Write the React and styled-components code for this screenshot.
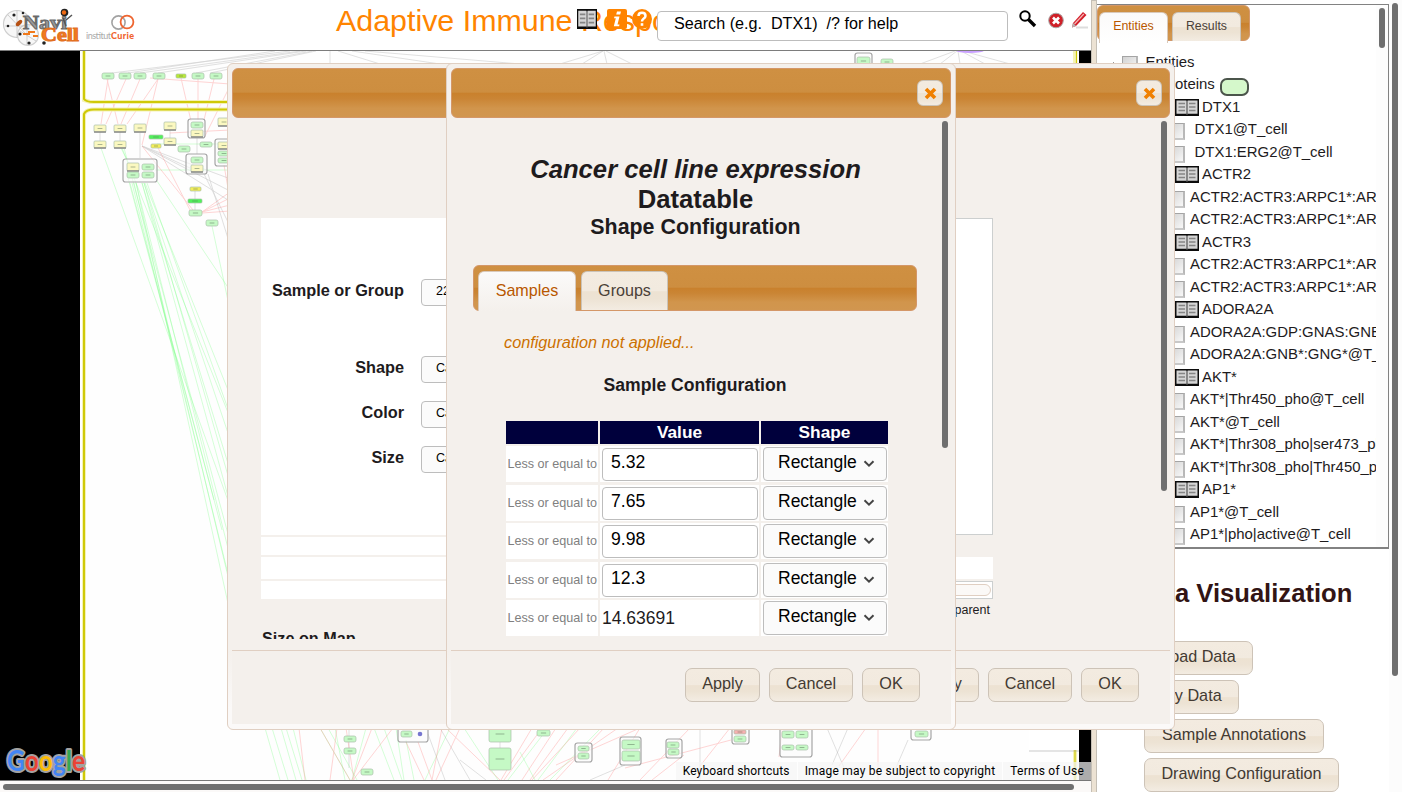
import React from "react";
import styled, { createGlobalStyle, css } from "styled-components";

const Global = createGlobalStyle`
  * { box-sizing: border-box; }
  html, body { margin: 0; padding: 0; overflow: hidden; }
  body { font-family: "Liberation Sans", Arial, Helvetica, sans-serif; color: #1e1b1d; background: #fff; }
`;

const bronze = css`
  background: linear-gradient(#cf9042 0%, #cd8e40 48%, #c9812d 51%, #ca8535 62%, #d1954c 82%, #d1964f 100%);
  border: 1px solid #d49768;
`;
const cream = css`
  background: linear-gradient(#f3ebe0 0%, #f2eadf 49%, #ede2d2 52%, #ede3d4 70%, #f3ece2 100%);
  border: 1px solid #cbc3b8;
`;

const Page = styled.div`
  position: relative;
  display: flex;
  width: 1402px;
  height: 792px;
  overflow: hidden;
  background: #fff;
`;
const MapPane = styled.div`
  width: 1091px;
  display: flex;
  flex-direction: column;
`;
const Splitter = styled.div`
  width: 6px;
  background: #ece2d3;
  border: 1px solid #c5bfb5;
  border-bottom: 0;
`;
const Header = styled.header`
  height: 51px;
  flex: none;
  display: flex;
  align-items: flex-start;
  border-bottom: 1px solid #7c7c7c;
`;
const Logos = styled.div`
  width: 336px;
  height: 50px;
`;
const Title = styled.h1`
  width: 241px;
  margin: 2px 0 0;
  font-size: 30.4px;
  line-height: 37px;
  font-weight: 400;
  white-space: nowrap;
  color: #ff8400;
`;
const Tools = styled.div`
  z-index: 1;
  display: flex;
  align-items: flex-start;
  padding-top: 9px;
  svg { display: block; }
`;
const ToolSlot = styled.div`
  margin-left: ${(p) => p.$gap || 0}px;
`;
const SearchBox = styled.div`
  width: 351px;
  height: 30px;
  margin: 2px 0 0 5px;
  padding: 0 16px;
  border: 1px solid #bdbdbd;
  border-radius: 4px;
  background: #fff;
  color: #000;
  font-size: 16.15px;
  line-height: 23px;
  white-space: pre;
`;
const MapView = styled.div`
  position: relative;
  flex: 1;
  background: #000;
  border-bottom: 1px solid #777;
  overflow: hidden;
`;
const MapDrawing = styled.svg`
  display: block;
`;
const MapCredits = styled.div`
  position: absolute;
  right: 0;
  bottom: 0;
  display: flex;
  gap: 1px;
`;
const Credit = styled.span`
  height: 18px;
  padding: 0 7px;
  font: 12px/18px Roboto, sans-serif;
  letter-spacing: ${(p) => p.$track || 0}px;
  color: #000;
  white-space: nowrap;
  background: rgba(245, 245, 245, 0.7);
`;
const HScroll = styled.div`
  height: 11px;
  flex: none;
  padding: 3px 0 0 3px;
  background: #fbf9f8;
`;
const HThumb = styled.div`
  width: 1071px;
  height: 6px;
  border-radius: 3px;
  background: #6f6f6f;
`;

const SidePane = styled.aside`
  width: 305px;
  display: flex;
`;
const SideMain = styled.div`
  width: 292px;
  padding-top: 4px;
`;
const SideScroll = styled.div`
  flex: 1;
  padding: 3px 0 0 3px;
  background: #fcfcfc;
`;
const Thumb = styled.div`
  width: 6px;
  height: ${(p) => p.$h}px;
  border-radius: 3px;
  background: #6f6f6f;
`;
const TreePanel = styled.div`
  display: flex;
  height: 545px;
  border: 1px solid #828282;
  border-left: 0;
  border-bottom-width: 2px;
`;
const TreeBody = styled.div`
  width: 279px;
  overflow: hidden;
`;
const TreeScroll = styled.div`
  flex: 1;
  padding: 3px 0 0 3px;
  background: #fdfdfd;
`;
const TabBar = styled.div`
  ${bronze}
  display: flex;
  align-items: flex-start;
  gap: ${(p) => (p.$small ? 4 : 5)}px;
  width: ${(p) => p.$w};
  height: ${(p) => (p.$small ? 36 : 46)}px;
  padding: ${(p) => (p.$small ? "6px 0 0 1px" : "5px 0 0 4px")};
  border-radius: 6px;
`;
const Tab = styled.div`
  ${cream}
  width: ${(p) => p.$w}px;
  height: ${(p) => p.$h}px;
  border-bottom: 0;
  border-radius: 6px 6px 0 0;
  text-align: center;
  font-size: ${(p) => p.$size}px;
  line-height: ${(p) => p.$lh}px;
  color: #4a4037;
  ${(p) => p.$active && css`
    background: linear-gradient(#fbfaf9, ${p.$end});
    border-color: #d9c9ba;
    color: #b85700;
  `}
`;
const Tree = styled.div`
  padding-top: 9.5px;
  width: 400px;
`;
const TreeRow = styled.div`
  display: flex;
  height: 22.5px;
  padding-left: ${(p) => p.$indent}px;
  gap: ${(p) => p.$gap}px;
  font-size: 14.94px;
  line-height: 22px;
  white-space: nowrap;
  svg { flex: none; margin-top: 3px; }
`;
const CheckBox = styled.span`
  flex: none;
  width: 16px;
  height: 17px;
  margin-top: ${(p) => p.$top}px;
  border: 1px solid #9c9c9c;
  border-width: 1px 2px 2px 1px;
  border-color: #a4a4a4 #b8b8b8 #c8c8c8 #a4a4a4;
  background: linear-gradient(135deg, #d2d2d2, #f8f8f8);
`;
const Twisty = styled.span`
  width: 0;
  height: 0;
  margin: 11px 8px 0 0;
  border-left: 4px solid transparent;
  border-bottom: 4px solid #333;
`;
const ProteinSwatch = styled.span`
  width: 29px;
  height: 18px;
  margin-top: 5px;
  border: 2px solid #4b554b;
  border-radius: 7px;
  background: #d5f8cb;
`;
const SideTitle = styled.h2`
  margin: 28px 0 32px;
  font-size: 25.6px;
  line-height: 32px;
  text-align: center;
  color: #321414;
  white-space: nowrap;
`;
const SideButtons = styled.div`
  display: flex;
  flex-direction: column;
  align-items: flex-start;
  gap: 5px;
  padding-left: 47px;
`;
const Button = styled.div`
  ${cream}
  width: ${(p) => p.$w}px;
  height: 34px;
  flex: none;
  border-radius: 7px;
  border-color: #cdc3b7;
  text-align: center;
  font-size: 16.2px;
  line-height: 29px;
  color: #433a32;
`;

const Dialog = styled.section`
  position: absolute;
  left: ${(p) => p.$x}px;
  top: 63px;
  width: ${(p) => p.$w}px;
  height: 667px;
  display: flex;
  flex-direction: column;
  padding: 4px 4px 5px 4px;
  border: 1px solid #e0cfc2;
  border-radius: 6px;
  background: linear-gradient(#f4f0ec 0%, #f4f0ec 88%, #fbf9f8 97%);
`;
const DialogTitle = styled.div`
  ${bronze}
  height: 50px;
  flex: none;
  display: flex;
  justify-content: flex-end;
  border-radius: 6px;
  padding: 11px 7px 0 0;
`;
const CloseButton = styled.div`
  ${cream}
  width: 26px;
  height: 26px;
  display: grid;
  place-items: center;
  border-radius: 6px;
`;
const DialogBody = styled.div`
  flex: 1;
  display: flex;
  min-height: 0;
  background: #f4f0ec;
`;
const DialogContent = styled.div`
  flex: 1;
  height: 521px;
  overflow: hidden;
`;
const DialogScroll = styled.div`
  width: 9px;
  padding-top: 3px;
`;
const DialogFoot = styled.div`
  height: 74px;
  flex: none;
  display: flex;
  justify-content: flex-end;
  gap: 9px;
  padding: 17px 31px 0 0;
  border-top: 1px solid #e0cfc2;
  background: #f4f0ec;
`;

const Options = styled.div`
  display: flex;
  margin: 100px 0 0 29px;
  width: 732px;
`;
const OptionColumn = styled.div`
  width: 366px;
  display: flex;
  flex-direction: column;
`;
const OptionForm = styled.div`
  height: 317px;
  padding: 61px 0 0 10px;
  background: #fff;
`;
const OptionRow = styled.div`
  display: flex;
  height: 26px;
  margin-bottom: ${(p) => p.$gap}px;
`;
const OptionLabel = styled.label`
  width: 133px;
  text-align: right;
  font-size: 16.3px;
  font-weight: 700;
  line-height: 22px;
`;
const SmallSelect = styled.div`
  width: 180px;
  height: 27px;
  margin-left: 17px;
  padding-left: 14px;
  border: 1px solid #bdbdbd;
  border-radius: 4px;
  background: #fbfbfb;
  font-size: 12.5px;
  line-height: 23px;
  color: #000;
  white-space: nowrap;
`;
const Strip = styled.div`
  height: ${(p) => p.$h}px;
  margin-top: ${(p) => p.$mt}px;
  background: #fff;
`;
const PreviewBox = styled.div`
  height: 317px;
  border: 1px solid #cccfcf;
  background: #fff;
`;
const SliderBox = styled.div`
  height: 18px;
  margin-top: 2px;
  padding: 2px 1px;
  border: 1px solid #cccfcf;
  background: #fff;
`;
const SliderTrack = styled.div`
  height: 12px;
  border: 1px solid #e0cfc2;
  border-radius: 6px;
  background: #fbf9f7;
`;
const SliderCaption = styled.div`
  margin-top: 3px;
  padding-right: 3px;
  text-align: right;
  font-size: 12.5px;
  line-height: 16px;
  height: 16px;
`;
const SectionLabel = styled.div`
  margin: 10px 0 0 30px;
  font-size: 16.2px;
  font-weight: 700;
  line-height: 20px;
`;

const Heading = styled.div`
  padding: 36px 1px 0 0;
  width: 490px;
  text-align: center;
  font-weight: 700;
  font-size: 25.65px;
  line-height: 30px;
`;
const SubHeading = styled.div`
  font-size: 21.4px;
  line-height: 26px;
`;
const TabArea = styled.div`
  padding: 25px 0 0 22px;
`;
const Status = styled.p`
  margin: 21px 0 0 31px;
  font-size: 16.25px;
  line-height: 20px;
  font-style: italic;
  color: #cc7000;
`;
const TableTitle = styled.div`
  margin: 22px 0 0;
  width: 444px;
  text-align: center;
  font-size: 17.6px;
  font-weight: 700;
  line-height: 22px;
`;
const Grid = styled.div`
  display: grid;
  grid-template-columns: 92px 159px 127px;
  column-gap: 2px;
  row-gap: 2.5px;
  margin: 25px 0 0 33px;
`;
const HeadCell = styled.div`
  height: 22.6px;
  background: #00003c;
  color: #fff;
  text-align: center;
  font-size: 17.3px;
  font-weight: 700;
  line-height: 23px;
`;
const Cell = styled.div`
  height: 36px;
  padding: 1px 2px;
  background: #fff;
`;
const HintCell = styled(Cell)`
  font-size: 12.6px;
  line-height: 35.5px;
  white-space: nowrap;
  color: #808080;
  padding-left: 1.5px;
`;
const ValueInput = styled.div`
  width: 156px;
  height: 33px;
  margin-top: 1px;
  padding-left: 8px;
  border: 1px solid #bdbdbd;
  border-radius: 4px;
  font-size: 17.6px;
  line-height: 26px;
  color: #000;
`;
const FixedValue = styled.div`
  font-size: 17.5px;
  line-height: 34px;
`;
const ShapeSelect = styled.div`
  width: 124px;
  height: 34px;
  display: flex;
  align-items: flex-start;
  padding: 0 11px 0 14px;
  justify-content: space-between;
  border: 1px solid #bdbdbd;
  border-radius: 4px;
  background: #fbfbfb;
  font-size: 17.5px;
  line-height: 28px;
  color: #000;
  svg { margin-top: 12px; }
`;

const Book = ({ w = 24, h = 17 }) => (
  <svg width={w} height={h} viewBox="0 0 24 17" preserveAspectRatio="none">
    <rect width="24" height="17" fill="#0c0c0c" />
    <path d="M1.5 1.5H11L12 2.2L13 1.5H22.5V14.8H1.5Z" fill="#d5d5d5" />
    <path d="M12 1.5V16" stroke="#555" strokeWidth="1.2" />
    <path d="M3.5 4.5H10M3.5 8H10M3.5 11.5H10M14 4.5H20.5M14 8H20.5M14 11.5H20.5" stroke="#858585" strokeWidth="1.5" />
  </svg>
);

const Cross = () => (
  <svg width="13" height="13" viewBox="0 0 13 13">
    <path d="M2 2L11 11M11 2L2 11" stroke="#f08000" strokeWidth="3.6" />
  </svg>
);

const Chevron = () => (
  <svg width="12" height="8" viewBox="0 0 12 8">
    <path d="M1.5 1.2L6 5.6L10.5 1.2" fill="none" stroke="#444" strokeWidth="2" />
  </svg>
);

const LogoArt = () => (
  <svg width="140" height="50" viewBox="0 0 140 50">
    <g fill="#f7f7f7" stroke="#cfcfcf" strokeWidth="1.2">
      <circle cx="17" cy="24" r="13.5" />
      <circle cx="28" cy="35" r="10.5" />
    </g>
    <g stroke="#bbb" strokeWidth=".7" fill="none">
      <path d="M8 15L25 33M17 11V38M5 26H30M20 31L36 41M27 26V45" />
    </g>
    <g fill="#222">
      <circle cx="14" cy="15" r="1.6" /><circle cx="23" cy="13" r="1.3" /><circle cx="8" cy="26" r="1.3" />
      <circle cx="20" cy="34" r="1.6" /><circle cx="29" cy="43" r="1.6" /><circle cx="44" cy="43" r="1.8" />
      <ellipse cx="19" cy="23" rx="4" ry="2" transform="rotate(-45 19 23)" fill="#b65013" />
    </g>
    <path d="M23 34H30M28 32H35M33 36H38" stroke="#f07a1c" strokeWidth="2" />
    <g fontFamily="Liberation Serif, serif" fontWeight="700">
      <text x="23" y="28.5" fontSize="18" fill="#9a9a9a" stroke="#6a6a6a" strokeWidth="1" textLength="44" lengthAdjust="spacingAndGlyphs">Navi</text>
      <text x="41" y="40.500" fontSize="19" fill="#f47a1f" stroke="#e2701f" strokeWidth="1" textLength="38" lengthAdjust="spacingAndGlyphs">Cell</text>
    </g>
    <path d="M63 18L66 26M66 20L72 15" stroke="#555" strokeWidth="1.5" />
    <circle cx="64.500" cy="12.500" r="3.800" fill="#222" />
    <circle cx="64" cy="12.500" r="2.200" fill="#ef6a13" />
    <circle cx="118.500" cy="22.500" r="6.600" fill="none" stroke="#a2a2a2" strokeWidth="1.600" />
    <circle cx="127" cy="22" r="6.400" fill="none" stroke="#ee6530" strokeWidth="1.800" />
    <g fontFamily="Lato, sans-serif" fontSize="9">
      <text x="86" y="38.500" fill="#aaa" textLength="25">institut</text>
      <text x="111" y="38.500" fill="#f0622d" fontWeight="900" textLength="23">Curie</text>
    </g>
  </svg>
);

/* [x, y, width, height, kind] */
const NODES = [
  [102, 73, 12, 6, "g"], [119, 73, 12, 6, "g"], [134, 73, 12, 6, "g"], [153, 73, 12, 6, "g"],
  [176, 74, 10, 4, "l"], [192, 73, 12, 6, "g"], [210, 73, 12, 6, "g"],
  [94, 125, 12, 7, "y"], [114, 125, 12, 7, "y"], [134, 124, 12, 8, "y"], [164, 122, 12, 8, "y"],
  [94, 141, 12, 7, "y"], [114, 141, 12, 7, "y"], [164, 138, 12, 7, "y"],
  [149, 135, 14, 4, "b"], [151, 144, 10, 4, "s"], [178, 146, 12, 6, "g"], [200, 142, 12, 5, "g"],
  [218, 118, 12, 8, "y"],
  [127, 163, 12, 8, "y"], [142, 164, 12, 6, "g"], [127, 172, 12, 6, "g"], [142, 172, 12, 6, "g"],
  [191, 122, 12, 6, "g"], [191, 130, 12, 7, "y"], [191, 157, 12, 6, "g"], [191, 165, 12, 7, "y"],
  [218, 142, 12, 7, "y"], [218, 151, 12, 5, "g"], [218, 158, 12, 5, "g"],
  [190, 187, 11, 4, "s"], [188, 199, 14, 4, "b"], [189, 210, 13, 6, "g"], [206, 220, 12, 6, "g"],
  [857, 57, 13, 8, "g"], [881, 59, 12, 6, "g"],
  [344, 736, 12, 6, "g"], [344, 748, 12, 6, "g"], [361, 769, 12, 6, "g"], [401, 731, 11, 6, "g"],
  [489, 726, 22, 16, "g"], [489, 748, 22, 22, "g"], [537, 730, 13, 6, "g"],
  [578, 746, 11, 5, "g"], [578, 753, 11, 6, "g"], [622, 740, 18, 9, "g"], [622, 751, 18, 10, "g"],
  [667, 742, 12, 6, "g"], [668, 749, 11, 6, "g"], [734, 730, 12, 4, "r"], [734, 736, 12, 6, "g"],
  [782, 731, 12, 7, "g"], [796, 731, 12, 7, "g"], [782, 745, 12, 5, "g"], [796, 745, 12, 5, "g"],
  [915, 731, 13, 6, "g"],
];
const FRAMES = [
  [123, 159, 34, 23], [188, 119, 17, 19], [186, 154, 21, 20], [215, 139, 20, 27],
  [855, 53, 17, 14], [398, 722, 30, 20], [575, 743, 17, 19], [620, 737, 21, 28],
  [666, 739, 16, 19], [732, 722, 17, 22], [780, 722, 32, 35], [911, 722, 20, 18],
];
const FILL = { g: "#c5f9c5", y: "#fbf8c0", l: "#b9e836", b: "#4ff259", s: "#f4ee58", r: "#f6b0b0" };

const GREEN = [
  "M101 148L235 520", "M121 148L127 160", "M157 181L231 292", "M212 226L230 310",
  "M144 183L235 500", "M142 183L230 470", "M122 148L235 430", "M124 148L235 560", "M136 183L236 640",
  "M134 183L236 610", "M132 183L232 590", "M145 183L232 400", "M147 183L232 420", "M144 183L232 445",
  "M130 183L222 530", "M128 178L214 500", "M142 183L240 540", "M136 183L236 580", "M157 144H228M155 170H228",
  "M265 728L280 780", "M272 728L288 780", "M281 728L296 780", "M286 728L302 780", "M293 728L306 780",
  "M320 728L350 780", "M328 728L357 780", "M335 728L345 780", "M366 728L352 780", "M374 728L394 780",
  "M384 728L402 780", "M396 728L404 780", "M406 740L414 780", "M450 728L425 780", "M464 728L498 780",
  "M520 752L535 780", "M548 728L508 780", "M577 728L538 780", "M601 728L550 780",
];
const RED = [
  "M108 79L101 124M107 79L118 124M126 79L106 124M140 79L121 124M158 79L127 124M158 79L142 145",
  "M181 78L191 121M198 79V120M214 79L204 120M230 86L204 138M150 78L230 84",
  "M142 146L193 210M157 146L190 210", "M202 212L230 192M202 212L230 198M202 212L230 205M202 213L230 211",
  "M170 133L230 130", "M224 165L230 200",
  "M299 728L305 780M320 728L350 780M337 728L330 780M346 728L354 780M393 728L353 780M372 728L352 780",
  "M406 742L424 780M418 742L432 780M442 728L432 780M460 728L436 780M448 730L500 780",
  "M532 728L501 780M542 728L504 780M556 728L522 780M568 728L530 780M580 728L532 780M604 728L556 780M618 728L543 780M640 728L608 780",
  "M625 768L731 740M684 755L652 780M690 728L640 780M730 728L700 766M782 730L779 757M878 728V780M866 728L839 766M556 765L640 728",
];
const GREY = [
  "M290 51L112 73M275 51L128 73M300 51L140 73M306 51L158 73M312 51L196 73M316 51L210 73M330 51L330 64M338 51L380 64M352 51L440 64M365 51L520 64",
  "M603 51L560 64M603 51L582 64M604 51L607 64M606 51L632 64", "M955 51L920 64M957 51L940 64M958 51L960 64M961 51L985 64M963 51L1010 64",
  "M142 146L228 178M142 146L228 190M142 146L228 200M142 146L190 168", "M140 133V158M100 132V141M120 132V141M195 191V210M170 130V138M197 138V154",
  "M208 174L230 245M204 174L228 222", "M349 730V768M500 742V748M428 734L445 780M460 760L486 780M625 765L590 780M700 728V780M827 728L845 770M848 728L832 765M908 740L895 770M440 728L470 780",
];

const Drawing = () => (
  <MapDrawing width="1091" height="729" viewBox="0 51 1091 729">
    <rect x="80" y="51" width="999" height="729" fill="#fefefe" />
    <g fill="none" stroke="#a9a9a9" strokeWidth=".7" opacity=".5">{GREY.map((d) => <path key={d} d={d} />)}</g>
    <g fill="none" stroke="#7dff86" strokeWidth="1">{GREEN.map((d) => <path key={d} d={d} opacity=".32" />)}</g>
    <g fill="none" stroke="#ff8c8c" strokeWidth=".9" opacity=".4">{RED.map((d) => <path key={d} d={d} />)}</g>
    <g fill="none" stroke="#f4f2b4" strokeWidth="4">
      <path d="M84 51V100L90 102H1075V51M84 790V115Q85 110 92 109.500H1075V780" />
    </g>
    <g fill="none" stroke="#cfc907" strokeWidth="2">
      <path d="M84 51V99Q86 102 94 102H1058M84 790V114Q86 109.500 94 109.500H1058" />
      <path d="M1076.500 51V66M1075 740V780" strokeWidth="1.200" />
    </g>
    <g fill="#fafafa" fillOpacity=".6" stroke="#a6a6a6" strokeWidth="1.200">
      {FRAMES.map(([x, y, w, h]) => <rect key={`${x}-${y}`} x={x} y={y} width={w} height={h} rx="2.500" />)}
    </g>
    {NODES.map(([x, y, w, h, k]) => (
      <g key={`${x}-${y}`}>
        <rect x={x} y={y} width={w} height={h} rx={k === "g" ? 1.8 : 1} fill={FILL[k]} stroke="#a9bfa9" strokeWidth=".7" />
        {k === "y" && <path d={`M${x} ${y + h}h${w}`} stroke="#858585" strokeWidth="1.4" />}
        <path d={`M${x + w * 0.3} ${y + h / 2}h${w * 0.4}`} stroke="#5d755d" strokeWidth="1" opacity=".5" />
      </g>
    ))}
    <ellipse cx="970" cy="50.500" rx="14" ry="2.500" fill="#c9a0ff" />
    <circle cx="420" cy="734" r="2.300" fill="#7675cf" />
    <rect x="1079" y="51" width="12" height="729" fill="#000" />
    <rect x="1029" y="728" width="50" height="24" fill="#999" opacity=".25" />
    <rect x="1029" y="727" width="50" height="23" fill="#fff" />
    <g fontFamily="Lato, sans-serif" fontSize="28" fontWeight="700" stroke="#a2a2a2" strokeWidth="4" strokeLinejoin="round" paintOrder="stroke">
      <text x="7" y="771" textLength="78" lengthAdjust="spacingAndGlyphs">
        <tspan fill="#4285f4">G</tspan><tspan fill="#ea4335">o</tspan><tspan fill="#fbbc05">o</tspan>
        <tspan fill="#4285f4">g</tspan><tspan fill="#34a853">l</tspan><tspan fill="#ea4335">e</tspan>
      </text>
    </g>
  </MapDrawing>
);

const TREE = [
  ["gene", "DTX1"], ["first", "DTX1@T_cell"], ["first", "DTX1:ERG2@T_cell"],
  ["gene", "ACTR2"], ["item", "ACTR2:ACTR3:ARPC1*:ARPC2"], ["item", "ACTR2:ACTR3:ARPC1*:ARPC2"],
  ["gene", "ACTR3"], ["item", "ACTR2:ACTR3:ARPC1*:ARPC2"], ["item", "ACTR2:ACTR3:ARPC1*:ARPC2"],
  ["gene", "ADORA2A"], ["item", "ADORA2A:GDP:GNAS:GNB*"], ["item", "ADORA2A:GNB*:GNG*@T_cell"],
  ["gene", "AKT*"], ["item", "AKT*|Thr450_pho@T_cell"], ["item", "AKT*@T_cell"],
  ["item", "AKT*|Thr308_pho|ser473_pho"], ["item", "AKT*|Thr308_pho|Thr450_pho"],
  ["gene", "AP1*"], ["item", "AP1*@T_cell"], ["item", "AP1*|pho|active@T_cell"],
];
const VALUES = ["5.32", "7.65", "9.98", "12.3", "14.63691"];

const DialogFrame = ({ x, w, thumb, children }) => (
  <Dialog $x={x} $w={w}>
    <DialogTitle><CloseButton><Cross /></CloseButton></DialogTitle>
    <DialogBody>
      <DialogContent>{children}</DialogContent>
      <DialogScroll><Thumb $h={thumb} /></DialogScroll>
    </DialogBody>
    <DialogFoot>
      <Button $w={75}>Apply</Button>
      <Button $w={84}>Cancel</Button>
      <Button $w={58}>OK</Button>
    </DialogFoot>
  </Dialog>
);

export default function App() {
  return (
    <Page>
      <Global />
      <MapPane>
        <Header>
          <Logos><LogoArt /></Logos>
          <Title>Adaptive Immune Response</Title>
          <Tools>
            <Book w={20} h={20} />
            <ToolSlot $gap={10}>
              <svg width="20" height="20" viewBox="0 0 20 20">
                <rect width="20" height="20" rx="2" fill="#ff8400" />
                <path d="M10 2.500h4l-.8 3h-4zM7.500 7.500h5l-2 8h2l-.4 1.800h-5.300l2-8h-1.800z" fill="#fff" />
              </svg>
            </ToolSlot>
            <ToolSlot $gap={5}>
              <svg width="20" height="20" viewBox="0 0 20 20">
                <circle cx="10" cy="10" r="10" fill="#ff8400" />
                <path d="M6.500 7Q6.500 3.800 10 3.800T13.500 7Q13.500 8.500 11.500 9.800Q10 10.800 10 12.500" fill="none" stroke="#fff" strokeWidth="2.500" />
                <rect x="8.700" y="14.200" width="2.600" height="2.600" fill="#fff" />
              </svg>
            </ToolSlot>
            <SearchBox>{"Search (e.g.  DTX1)  /? for help"}</SearchBox>
            <ToolSlot $gap={10}>
              <svg width="20" height="20" viewBox="0 0 20 20">
                <circle cx="7" cy="7" r="4.700" fill="none" stroke="#000" strokeWidth="2" />
                <path d="M10.500 10.500L17 17" stroke="#000" strokeWidth="3.400" />
              </svg>
            </ToolSlot>
            <ToolSlot $gap={10}>
              <svg width="16" height="21" viewBox="0 0 16 21">
                <circle cx="8" cy="11.500" r="7.300" fill="#cf2028" stroke="#a8a8a8" strokeWidth="1" />
                <path d="M5 8.500L11 14.500M11 8.500L5 14.500" stroke="#fff" strokeWidth="2.600" />
              </svg>
            </ToolSlot>
            <ToolSlot $gap={7}>
              <svg width="18" height="21" viewBox="0 0 18 21">
                <path d="M5 18.500H17" stroke="#ddd" strokeWidth="2" />
                <path d="M12 3L15.500 6L5 17L1 18.500L2 14Z" fill="#d3202b" />
                <path d="M12.800 5L3.500 15" stroke="#f5b6b6" strokeWidth="1.200" />
                <path d="M2 14L5 17L1 18.500Z" fill="#b5b5b5" />
              </svg>
            </ToolSlot>
          </Tools>
        </Header>
        <MapView>
          <Drawing />
          <MapCredits>
            <Credit $track={0.16}>Keyboard shortcuts</Credit>
            <Credit $track={0.22}>Image may be subject to copyright</Credit>
            <Credit $track={0.22}>Terms of Use</Credit>
          </MapCredits>
        </MapView>
        <HScroll><HThumb /></HScroll>
      </MapPane>
      <Splitter />
      <SidePane>
        <SideMain>
          <TreePanel>
            <TreeBody>
              <TabBar $small $w="153px">
                <Tab $w={69} $h={31} $size={12.4} $lh={26} $active $end="#fff">Entities</Tab>
                <Tab $w={69} $h={29} $size={12.3} $lh={26}>Results</Tab>
              </TabBar>
              <Tree>
                <TreeRow $indent={13} $gap={0}>
                  <Twisty />
                  <CheckBox $top={5} />
                  <TreeRow as="span" $indent={7.5} $gap={0}>Entities</TreeRow>
                </TreeRow>
                <TreeRow $indent={63} $gap={5.5}>Proteins<ProteinSwatch /></TreeRow>
                {TREE.map(([kind, label], i) =>
                  kind === "gene" ? (
                    <TreeRow key={i} $indent={78} $gap={3}><Book />{label}</TreeRow>
                  ) : (
                    <TreeRow key={i} $indent={72} $gap={kind === "first" ? 9.5 : 5}><CheckBox $top={5} />{label}</TreeRow>
                  )
                )}
              </Tree>
            </TreeBody>
            <TreeScroll><Thumb $h={40} /></TreeScroll>
          </TreePanel>
          <SideTitle>Data Visualization</SideTitle>
          <SideButtons>
            <Button $w={109}>Load Data</Button>
            <Button $w={95}>My Data</Button>
            <Button $w={180}>Sample Annotations</Button>
            <Button $w={195}>Drawing Configuration</Button>
          </SideButtons>
        </SideMain>
        <SideScroll><Thumb $h={673} /></SideScroll>
      </SidePane>

      <DialogFrame x={227} w={948} thumb={370}>
        <Options>
          <OptionColumn>
            <OptionForm>
              <OptionRow $gap={51}><OptionLabel>Sample or Group</OptionLabel><SmallSelect>22RV1</SmallSelect></OptionRow>
              {["Shape", "Color", "Size"].map((name) => (
                <OptionRow key={name} $gap={19}><OptionLabel>{name}</OptionLabel><SmallSelect>Cancer cell line</SmallSelect></OptionRow>
              ))}
            </OptionForm>
            <Strip $h={18} $mt={2} />
            <Strip $h={22} $mt={2} />
            <Strip $h={18} $mt={2} />
          </OptionColumn>
          <OptionColumn>
            <PreviewBox />
            <Strip $h={22} $mt={22} />
            <SliderBox><SliderTrack /></SliderBox>
            <SliderCaption>Transparent</SliderCaption>
          </OptionColumn>
        </Options>
        <SectionLabel>Size on Map</SectionLabel>
      </DialogFrame>

      <DialogFrame x={446} w={510} thumb={327}>
        <Heading>
          <em>Cancer cell line expression</em>
          <br />
          Datatable
          <SubHeading>Shape Configuration</SubHeading>
        </Heading>
        <TabArea>
          <TabBar $w="444px">
            <Tab $w={98} $h={40} $size={16.1} $lh={37} $active $end="#f4f0ec">Samples</Tab>
            <Tab $w={87} $h={39} $size={16.1} $lh={37}>Groups</Tab>
          </TabBar>
          <Status>configuration not applied...</Status>
          <TableTitle>Sample Configuration</TableTitle>
          <Grid>
            <HeadCell />
            <HeadCell>Value</HeadCell>
            <HeadCell>Shape</HeadCell>
            {VALUES.map((v, i) => (
              <React.Fragment key={v}>
                <HintCell>Less or equal to</HintCell>
                <Cell>{i < 4 ? <ValueInput>{v}</ValueInput> : <FixedValue>{v}</FixedValue>}</Cell>
                <Cell><ShapeSelect>Rectangle<Chevron /></ShapeSelect></Cell>
              </React.Fragment>
            ))}
          </Grid>
        </TabArea>
      </DialogFrame>
    </Page>
  );
}
